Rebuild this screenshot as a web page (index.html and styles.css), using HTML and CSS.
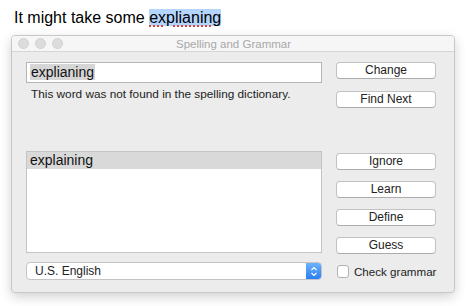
FILE: index.html
```html
<!DOCTYPE html>
<html lang="en">
<head>
    <meta charset="UTF-8">
    <title>Spelling and Grammar</title>
    <link rel="stylesheet" href="styles.css">
</head>
<body>
    <p class="doc-text">It might take some <span class="misspelled">explianing</span></p>

    <div class="window">
        <div class="titlebar">
            <div class="lights">
                <span class="light"></span>
                <span class="light"></span>
                <span class="light"></span>
            </div>
            <div class="title">Spelling and Grammar</div>
        </div>

        <div class="panel">
            <div class="left-col">
                <div class="word-field"><span class="word-sel">explianing</span></div>
                <div class="message">This word was not found in the spelling dictionary.</div>

                <div class="guesses">
                    <div class="guess selected">explaining</div>
                </div>

                <div class="popup">
                    <span class="popup-label">U.S. English</span>
                    <span class="stepper">
                        <svg width="8" height="11" viewBox="0 0 8 11">
                            <path d="M1.5 4 L4 1.5 L6.5 4" fill="none" stroke="#fff" stroke-width="1.2"/>
                            <path d="M1.5 7 L4 9.5 L6.5 7" fill="none" stroke="#fff" stroke-width="1.2"/>
                        </svg>
                    </span>
                </div>
            </div>

            <div class="right-col">
                <button class="btn">Change</button>
                <button class="btn btn-next">Find Next</button>
                <button class="btn btn-ignore">Ignore</button>
                <button class="btn">Learn</button>
                <button class="btn">Define</button>
                <button class="btn">Guess</button>
                <label class="check-row">
                    <span class="checkbox"></span>
                    Check grammar
                </label>
            </div>
        </div>
    </div>
</body>
</html>
```

FILE: styles.css
```css
* {
    margin: 0;
    padding: 0;
    box-sizing: border-box;
}
body {
    background-color: #fff;
    font-family: 'Liberation Sans', Arial, sans-serif;
    color: #222;
    width: 469px;
    height: 306px;
    overflow: hidden;
}
.doc-text {
    font-size: 16px;
    color: #000;
    padding: 8px 0 0 14px;
    line-height: 20px;
    height: 35px;
}
.misspelled {
    background-color: #b4d5fe;
    text-decoration-line: underline;
    text-decoration-style: dotted;
    text-decoration-color: #e0463c;
    text-decoration-thickness: 2px;
    text-underline-offset: 2px;
}

/* dialog window */
.window {
    margin-left: 11px;
    width: 444px;
    height: 258px;
    background-color: #ececec;
    border: 1px solid #c8c8c8;
    border-radius: 4px;
    box-shadow: 0 4px 12px rgba(0, 0, 0, 0.18);
    overflow: hidden;
}
.titlebar {
    display: flex;
    align-items: center;
    height: 16px;
    background-color: #f6f6f6;
    border-bottom: 1px solid #d6d6d6;
    padding-left: 6px;
}
.lights {
    display: flex;
    gap: 6px;
}
.light {
    display: block;
    width: 11px;
    height: 11px;
    border-radius: 50%;
    background-color: #dcdcdc;
    border: 1px solid #d0d0d0;
}
.title {
    flex: 1;
    text-align: center;
    font-size: 11.5px;
    color: #a8a8a8;
    margin-right: 50px;
}

.panel {
    display: flex;
    gap: 14px;
    padding: 10px 0 0 14px;
}
.left-col {
    width: 296px;
    display: flex;
    flex-direction: column;
}
.word-field {
    height: 21px;
    background-color: #fff;
    border: 1px solid #b5b5b5;
    font-size: 14px;
    line-height: 19px;
    padding-left: 3px;
    color: #111;
}
.word-sel {
    background-color: #d6d6d6;
    padding: 0 1px;
}
.message {
    font-size: 11.8px;
    line-height: 14px;
    color: #222;
    padding: 4px 0 0 5px;
    white-space: nowrap;
}
.guesses {
    margin-top: 50px;
    height: 102px;
    background-color: #fff;
    border: 1px solid #c4c4c4;
}
.guess {
    height: 17px;
    font-size: 14px;
    line-height: 16px;
    padding-left: 3px;
    color: #111;
}
.guess.selected {
    background-color: #d9d9d9;
}
.popup {
    margin-top: 9px;
    height: 18px;
    display: flex;
    align-items: center;
    background-color: #fff;
    border: 1px solid #c4c4c4;
    border-radius: 4px;
    overflow: hidden;
    font-size: 12px;
}
.popup-label {
    flex: 1;
    padding-left: 8px;
}
.stepper {
    width: 15px;
    height: 100%;
    display: flex;
    align-items: center;
    justify-content: center;
    background: linear-gradient(#6cb3fa, #2a7ef4);
}

.right-col {
    width: 100px;
    display: flex;
    flex-direction: column;
    gap: 11px;
}
.btn {
    display: block;
    width: 100px;
    height: 17px;
    background-color: #fff;
    border: 1px solid #c2c2c2;
    border-bottom-color: #acacac;
    border-radius: 4px;
    font-family: 'Liberation Sans', Arial, sans-serif;
    font-size: 12px;
    color: #222;
    line-height: 15px;
}
.btn-next {
    margin-top: 1px;
}
.btn-ignore {
    margin-top: 34px;
}
.check-row {
    display: flex;
    align-items: center;
    gap: 5px;
    font-size: 11.6px;
    color: #222;
    margin-left: 1px;
    white-space: nowrap;
}
.checkbox {
    display: block;
    flex: none;
    width: 12px;
    height: 13px;
    background-color: #fff;
    border: 1px solid #b0b0b0;
    border-radius: 3px;
}
```
